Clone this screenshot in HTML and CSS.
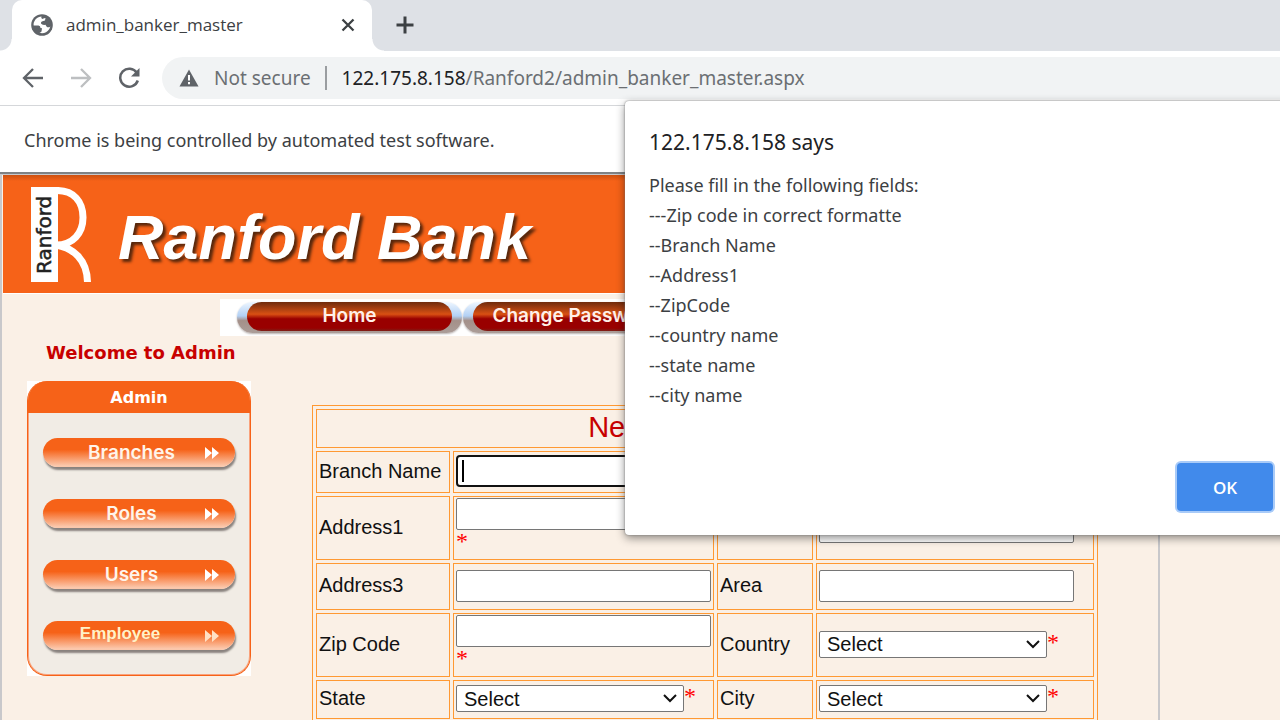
FILE: index.html
```html
<!DOCTYPE html>
<html lang="en">
<head>
<meta charset="utf-8">
<title>admin_banker_master</title>
<link rel="stylesheet" href="styles.css">
</head>
<body>
<div class="tabstrip">
  <div class="tab">
    <svg class="globe" width="22" height="22" viewBox="0 0 22 22"><circle cx="11" cy="11" r="10.8" fill="#5f6368"/><path d="M10.5 2.6C7 3 4.500 4.800 3.300 7.500 2.500 9 2.500 10.500 2.700 11.500L7.500 11.500Q9.500 11.700 9.500 14L11 14.300 10.500 17.500Q10 18.500 8.500 18.800C10 19.500 13 19.500 15 18.300 17.500 16.900 19 14.500 19.300 12.500 18.500 13.500 16.500 13.800 15.500 12.500L14.500 10.800Q11 11.300 10 9.500 9.500 7.500 11.500 7.200L14 6.500 14.500 4Q13 4 11.500 5 9.500 4.500 10.500 2.600Z" fill="#fff"/><path d="M2.7 12Q4 16.800 7.500 18.500L8 15.500 5.500 13.500Z" fill="#5f6368"/></svg>
    <span class="tab-title">admin_banker_master</span>
    <button class="icon-btn" aria-label="Close tab"><svg width="14" height="14" viewBox="0 0 14 14"><path d="M1.500 1.500L12.500 12.500M12.500 1.500L1.500 12.500" stroke="#3c4043" stroke-width="2.300"/></svg></button>
  </div>
  <button class="icon-btn new-tab" aria-label="New tab"><svg width="18" height="18" viewBox="0 0 18 18"><path d="M9 0.500V17.500M0.500 9H17.500" stroke="#3c4043" stroke-width="3"/></svg></button>
</div>
<div class="toolbar">
  <button class="icon-btn" aria-label="Back"><svg width="22" height="22" viewBox="0 0 22 22"><path d="M21 11H2.500M11 2L2 11L11 20" fill="none" stroke="#5f6368" stroke-width="2.300"/></svg></button>
  <button class="icon-btn" aria-label="Forward"><svg width="22" height="22" viewBox="0 0 22 22"><path d="M1 11H19.500M11 2L20 11L11 20" fill="none" stroke="#bdbfc1" stroke-width="2.300"/></svg></button>
  <button class="icon-btn" aria-label="Reload"><svg width="22" height="22" viewBox="0 0 22 22"><path d="M18.800 5.800A9 9 0 1 0 19.800 13.500" fill="none" stroke="#5f6368" stroke-width="2.500"/><path d="M21.500 1V9.500H13Z" fill="#5f6368"/></svg></button>
  <div class="omnibox">
    <svg width="20" height="18" viewBox="0 0 20 18"><path d="M10 0.500L19.500 17.500H0.500Z" fill="#5f6368"/><path d="M10 6V11.500M10 13V15.300" stroke="#fff" stroke-width="2"/></svg>
    <span class="secure">Not secure</span>
    <span class="url"><b>122.175.8.158</b>/Ranford2/admin_banker_master.aspx</span>
  </div>
</div>
<div class="infobar">Chrome is being controlled by automated test software.</div>

<main class="page">
  <div class="sheet">
    <header class="banner">
      <svg width="62" height="95" viewBox="0 0 62 95" role="img" aria-label="Ranford">
        <path d="M1 0H28V95H1Z" fill="#fff"/>
        <path d="M26 3.500C44 3 53 15 53 30.500S43 58 26 58C43 61 57 72 57.500 95" fill="none" stroke="#fff" stroke-width="7"/>
        <text x="-87" y="21" transform="rotate(-90)" class="mark">Ranford</text>
      </svg>
      <h1>Ranford Bank</h1>
    </header>
    <nav class="topnav">
      <a href="#home"><span>Home</span></a>
      <a href="#password"><span>Change Password</span></a>
    </nav>
    <div class="columns">
      <aside>
        <p class="welcome">Welcome to Admin</p>
        <div class="corner">
          <div class="menu">
            <h2>Admin</h2>
            <ul>
              <li><a href="#branches"><span>Branches</span><svg width="14" height="12" viewBox="0 0 14 12"><path d="M0 0L7 6L0 12ZM7 0L14 6L7 12Z"/></svg></a></li>
              <li><a href="#roles"><span>Roles</span><svg width="14" height="12" viewBox="0 0 14 12"><path d="M0 0L7 6L0 12ZM7 0L14 6L7 12Z"/></svg></a></li>
              <li><a href="#users"><span>Users</span><svg width="14" height="12" viewBox="0 0 14 12"><path d="M0 0L7 6L0 12ZM7 0L14 6L7 12Z"/></svg></a></li>
              <li><a href="#employee" class="employee"><span>Employee</span><svg width="14" height="12" viewBox="0 0 14 12"><path d="M0 0L7 6L0 12ZM7 0L14 6L7 12Z"/></svg></a></li>
            </ul>
          </div>
        </div>
      </aside>
      <form class="entry">
        <table>
          <colgroup><col class="c1"><col class="c2"><col class="c3"><col class="c4"></colgroup>
          <tr class="head"><th colspan="4">New Branch Entry</th></tr>
          <tr class="first">
            <td><label for="bn">Branch Name</label></td>
            <td><div class="active-field"><input id="bn" class="active"><i class="caret"></i></div></td>
            <td></td><td></td>
          </tr>
          <tr class="tall">
            <td><label for="a1">Address1</label></td>
            <td><input id="a1"><span class="req">*</span></td>
            <td><label for="a2">Address2</label></td>
            <td><input id="a2"></td>
          </tr>
          <tr class="mid">
            <td><label for="a3">Address3</label></td>
            <td><input id="a3"></td>
            <td><label for="ar">Area</label></td>
            <td><input id="ar"></td>
          </tr>
          <tr class="tall">
            <td><label for="zip">Zip Code</label></td>
            <td><input id="zip"><span class="req">*</span></td>
            <td><label for="co">Country</label></td>
            <td><div class="choice"><span class="pick"><select id="co"><option>Select</option></select><svg width="14" height="9" viewBox="0 0 14 9"><path d="M1 1L7 7L13 1"/></svg></span><span class="req">*</span></div></td>
          </tr>
          <tr class="low">
            <td><label for="st">State</label></td>
            <td><div class="choice"><span class="pick"><select id="st"><option>Select</option></select><svg width="14" height="9" viewBox="0 0 14 9"><path d="M1 1L7 7L13 1"/></svg></span><span class="req">*</span></div></td>
            <td><label for="ci">City</label></td>
            <td><div class="choice"><span class="pick"><select id="ci"><option>Select</option></select><svg width="14" height="9" viewBox="0 0 14 9"><path d="M1 1L7 7L13 1"/></svg></span><span class="req">*</span></div></td>
          </tr>
        </table>
      </form>
    </div>
  </div>
</main>

<div class="dialog" role="alertdialog" aria-labelledby="says">
  <h2 id="says">122.175.8.158 says</h2>
  <p>Please fill in the following fields:<br>---Zip code in correct formatte<br>--Branch Name<br>--Address1<br>--ZipCode<br>--country name<br>--state name<br>--city name</p>
  <div class="actions"><button class="ok">OK</button></div>
</div>
</body>
</html>
```

FILE: styles.css
```css
* { box-sizing: border-box; }
html, body { height: 100%; }
body {
  margin: 0;
  position: relative;
  display: flex;
  flex-direction: column;
  overflow: hidden;
  background: #fff;
  font-family: "Noto Sans", "Open Sans", sans-serif;
  color: #3c4043;
}
h1, h2, p, ul { margin: 0; padding: 0; }
svg { display: block; flex: none; }
.icon-btn { border: 0; background: none; padding: 0; display: flex; }

/* Browser chrome */
.tabstrip {
  flex: none;
  height: 51px;
  background: #dee1e6;
  display: flex;
  align-items: stretch;
  padding-left: 12px;
}
.tab {
  position: relative;
  width: 360px;
  background: #fff;
  border-radius: 10px 10px 0 0;
  display: flex;
  align-items: center;
  padding: 0 17px 2px 19px;
  font: 17px/24px "Open Sans", "Noto Sans", sans-serif;
}
.tab::before, .tab::after {
  content: "";
  position: absolute;
  bottom: 0;
  width: 12px;
  height: 12px;
}
.tab::before { left: -12px; background: radial-gradient(circle at 0 0, #dee1e6 11px, #fff 12px); }
.tab::after { right: -12px; background: radial-gradient(circle at 100% 0, #dee1e6 11px, #fff 12px); }
.tab-title { flex: 1; margin-left: 13px; }
.new-tab { margin-left: 24px; padding-bottom: 2px; align-items: center; }
.toolbar {
  flex: none;
  height: 55px;
  border-bottom: 1px solid #d5d7da;
  display: flex;
  align-items: center;
  gap: 26px;
  padding-left: 22px;
}
.omnibox {
  flex: 1;
  height: 42px;
  margin-left: -4px;
  background: #f1f3f4;
  border-radius: 21px 0 0 21px;
  display: flex;
  align-items: center;
  padding-left: 17px;
  font-size: 19px;
  white-space: nowrap;
  color: #6b6f73;
}
.secure { margin-left: 15px; padding-right: 14px; border-right: 2px solid #9a9da0; line-height: 24px; }
.url { margin-left: 15px; }
.url b { font-weight: 400; color: #202124; }
.infobar {
  flex: none;
  height: 66px;
  padding-left: 24px;
  line-height: 68px;
  font-size: 18px;
}

/* Bank site */
.page {
  flex: 1;
  min-height: 0;
  overflow: hidden;
  background: #faf0e6;
  border-top: 2px solid #7f8285;
}
.sheet {
  min-height: 100%;
  margin-right: 120px;
  border: solid #c8c8cb;
  border-width: 1px 2px 0;
}
.banner {
  display: flex;
  align-items: center;
  gap: 26px;
  height: 119px;
  margin-left: 1px;
  padding-left: 27px;
  background: linear-gradient(#cc500f, #f66218 6px);
  border-bottom: 1px solid #fff;
}
.mark { font: 20px "DejaVu Sans", Verdana, sans-serif; fill: #222; stroke: #222; stroke-width: 0.5px; }
h1 {
  font: italic 700 63px/70px "Liberation Sans", Arial, sans-serif;
  color: #fff;
  padding-top: 5px;
  text-shadow: 3px 3px 3px #57270c;
}
.topnav {
  display: flex;
  gap: 1px;
  margin: 5px 0 0 218px;
  padding: 3px 0 2px 17px;
  height: 37px;
  background: #fff;
}
.topnav a {
  width: 225px;
  height: 31px;
  padding: 0 10px;
  border-radius: 16px;
  background: linear-gradient(#eef6ff, #b2d0f4 45%, #a49089 60%, #ab9d98);
  box-shadow: 0 1px 2px #b8b2b0;
  text-decoration: none;
}
.topnav span {
  display: block;
  height: 29px;
  border-radius: 15px;
  background: linear-gradient(#6f2b0d, #d95013 42%, #990000 58%, #990000 90%, #7d2018);
  color: #fff0ea;
  font: 600 19px/28px Inter, sans-serif;
  text-align: center;
}
.columns { display: flex; align-items: flex-start; }
aside { flex: none; width: 310px; padding-left: 25px; }
.welcome {
  margin-left: 19px;
  font: 700 18px/22px "DejaVu Sans", Verdana, sans-serif;
  color: #c80000;
  padding-top: 6px;
}
.corner { width: 224px; margin-top: 17px; background: #fff; }
.menu {
  height: 295px;
  border: 1px solid #f66218;
  border-top: 0;
  border-radius: 20px;
  background: #f1ece5;
  box-shadow: inset 0 0 0 1px #f9a27c;
  overflow: hidden;
}
.menu h2 {
  background: #f66218;
  color: #fff;
  text-align: center;
  font: 700 16px/34px "DejaVu Sans", Verdana, sans-serif;
  height: 32px;
}
.menu ul { list-style: none; padding: 25px 15px 0; display: grid; gap: 32px; }
.menu a {
  display: flex;
  align-items: center;
  height: 29px;
  border-radius: 15px;
  padding: 0 16px 0 15px;
  background: linear-gradient(#f66218, #f66218 40%, #fbc7ab 95%);
  box-shadow: 1px 3px 2px #89827e;
  color: #fff4ea;
  text-decoration: none;
  font: 600 19px/29px Inter, sans-serif;
}
.menu a span { flex: 1; text-align: center; }
.menu a svg { fill: #fff; }
.menu .employee { font: 700 17px/26px "Liberation Sans", Arial, sans-serif; color: #fff2c8; padding-left: 0; }
.menu .employee span { padding-right: 8px; padding-bottom: 3px; }
.menu .employee svg { fill: #ffe0c4; }

.entry { margin-top: 69px; flex: none; }
table {
  width: 786px;
  table-layout: fixed;
  border: 1px solid #ff9933;
  border-spacing: 3px;
  font: 20px/23px "Liberation Sans", Arial, sans-serif;
  color: #111;
}
.c1 { width: 134px; }
.c2 { width: 261px; }
.c3 { width: 96px; }
.c4 { width: 278px; }
td, th { border: 1px solid #ff9933; padding: 0 2px 2px; }
.head { height: 39px; }
.first { height: 42px; }
.tall { height: 64px; }
.mid { height: 47px; }
.low { height: 39px; }
th { font-size: 29px; line-height: 33px; font-weight: 400; color: #c80000; }
input {
  display: block;
  width: 255px;
  height: 32px;
  border: 1px solid #767676;
  border-radius: 2px;
  background: #fff;
  padding: 0 6px;
}
.active { border: 2px solid #111; border-radius: 4px; }
.active-field { position: relative; }
.caret { position: absolute; left: 6px; top: 5px; width: 2px; height: 22px; background: #000; }
.req {
  display: block;
  height: 27px;
  font: 24px/22px "Liberation Serif", serif;
  color: #f00;
}
.choice { display: flex; }
.pick { position: relative; }
.pick svg {
  position: absolute;
  right: 7px;
  top: 9px;
  fill: none;
  stroke: #111;
  stroke-width: 2;
  pointer-events: none;
}
select {
  display: block;
  appearance: none;
  width: 228px;
  height: 27px;
  border: 1px solid #767676;
  border-radius: 2px;
  background: #fff;
  padding: 0 7px;
  font: 20px/24px "Liberation Sans", Arial, sans-serif;
  color: #111;
}

/* Alert */
.dialog {
  position: absolute;
  left: 625px;
  right: -18px;
  top: 101px;
  padding: 24px 25px 24px 24px;
  background: #fff;
  border-radius: 4px;
  box-shadow: 0 0 2px #777, 0 3px 10px rgba(0, 0, 0, 0.45);
}
.dialog h2 { font-size: 21px; line-height: 34px; font-weight: 400; color: #202124; }
.dialog p { margin-top: 11px; font-size: 18px; line-height: 30px; }
.actions { display: flex; justify-content: flex-end; margin-top: 53px; }
.ok {
  width: 96px;
  height: 48px;
  border: 0;
  border-radius: 4px;
  background: #418aeb;
  box-shadow: 0 0 0 2px #a9cbf8;
  color: #fff;
  font: 600 17px "Open Sans", "Noto Sans", sans-serif;
}
```
